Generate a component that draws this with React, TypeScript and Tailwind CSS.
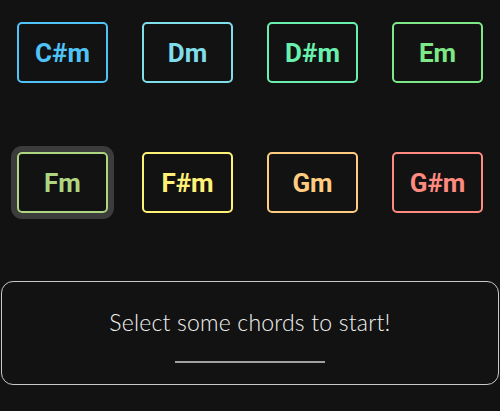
import React from 'react';

type Chord = {
  name: string;
  color: string;
  selected?: boolean;
};

const chords: Chord[] = [
  { name: 'C#m', color: 'border-[#4fc3f7] text-[#4fc3f7]' },
  { name: 'Dm', color: 'border-[#80deea] text-[#80deea]' },
  { name: 'D#m', color: 'border-[#69f0ae] text-[#69f0ae]' },
  { name: 'Em', color: 'border-[#7ee787] text-[#7ee787]' },
  { name: 'Fm', color: 'border-[#aed581] text-[#aed581]', selected: true },
  { name: 'F#m', color: 'border-[#fff176] text-[#fff176]' },
  { name: 'Gm', color: 'border-[#ffcc80] text-[#ffcc80]' },
  { name: 'G#m', color: 'border-[#ff8a80] text-[#ff8a80]' },
];

const App: React.FC = () => {
  return (
    <div className="w-[500px] h-[411px] bg-[#121212] overflow-hidden">
      <div className="grid grid-cols-4 gap-y-[69px] pt-[22px]">
        {chords.map((chord) => (
          <div key={chord.name} className="flex justify-center">
            <button
              className={`w-[91px] h-[61px] rounded-[5px] border-2 flex items-center justify-center text-[26px] font-bold pt-px ${chord.color} ${chord.selected ? 'ring-[6px] ring-[#3c3c3c]' : ''}`}
              style={{ fontFamily: 'Roboto, sans-serif' }}
            >
              {chord.name}
            </button>
          </div>
        ))}
      </div>

      {/* status panel */}
      <div className="mx-px mt-[68px] h-[104px] rounded-[12px] border-[1.5px] border-[#c8c8c8] flex flex-col items-center">
        <p
          className="mt-[25px] text-[23px] font-light text-[#f2f2f2] leading-[30px] tracking-[0.2px]"
          style={{ fontFamily: 'Lato, sans-serif' }}
        >
          Select some chords to start!
        </p>
        <div className="mt-[24px] w-[150px] h-[2px] bg-[#a0a0a0]" />
      </div>
    </div>
  );
};

export default App;
